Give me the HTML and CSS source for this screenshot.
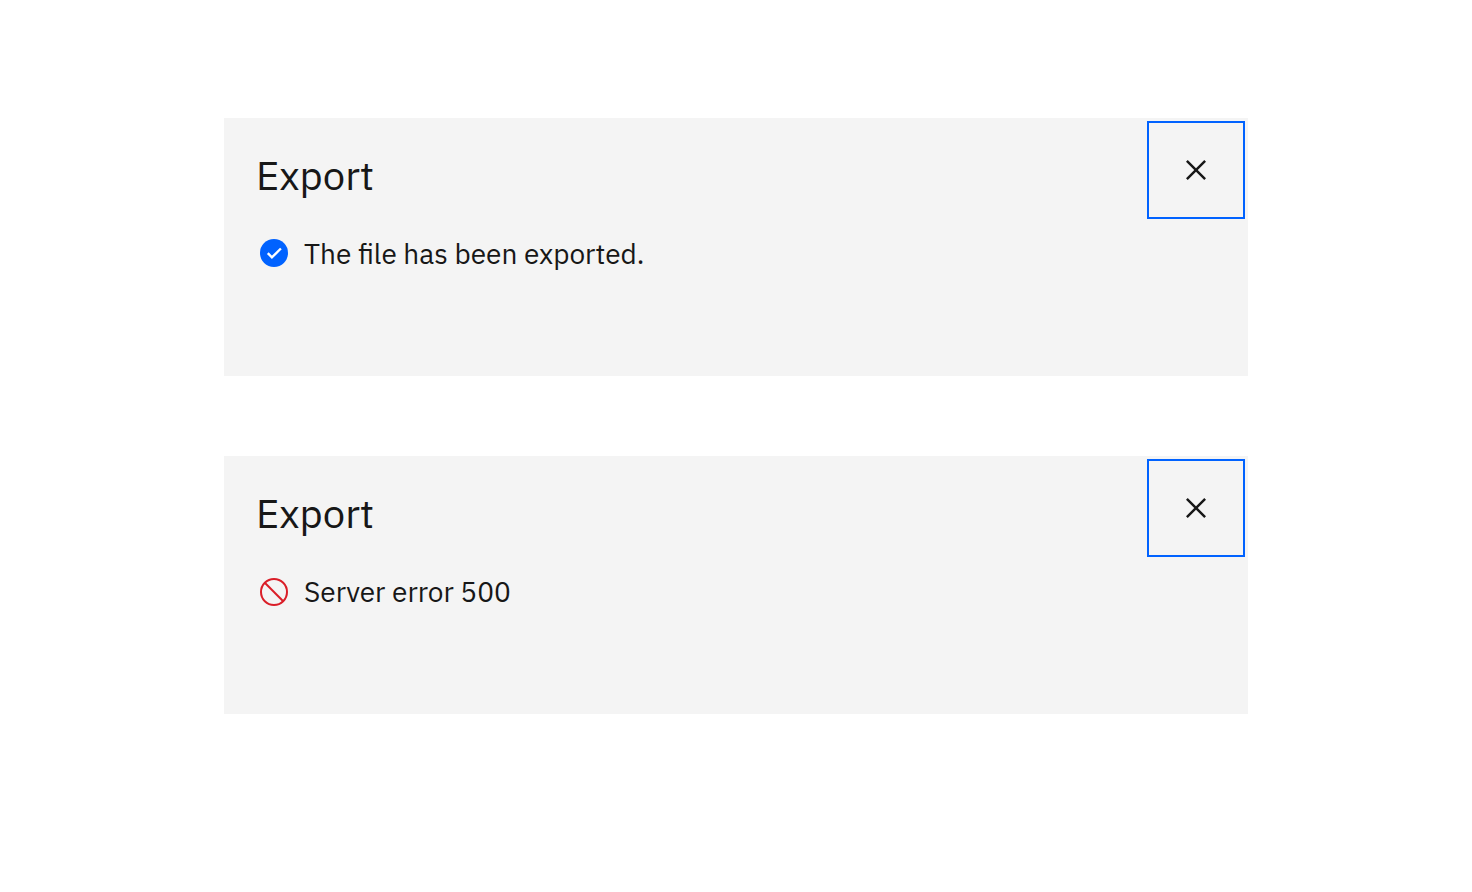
FILE: index.html
```html
<!DOCTYPE html>
<html lang="en">
<head>
<meta charset="utf-8">
<title>Export</title>
<link rel="stylesheet" href="styles.css">
</head>
<body>
<main class="page">
  <section class="modal" role="dialog" aria-labelledby="title-success">
    <div class="content">
      <h2 class="title" id="title-success">Export</h2>
      <p class="status">
        <svg class="status-icon" viewBox="0 0 32 32" aria-hidden="true"><circle cx="16" cy="15" r="14" fill="#0062ff"/><path d="m9.8 15.2 4.1 4.2 9-8.9" fill="none" stroke="#fff" stroke-width="2.4"/></svg>
        <span>The file has been exported.</span>
      </p>
    </div>
    <button class="close" type="button" aria-label="Close">
      <svg class="close-icon" viewBox="0 0 32 32" aria-hidden="true"><path d="M24 9.4 22.6 8 16 14.6 9.4 8 8 9.4 14.6 16 8 22.6 9.4 24 16 17.4 22.6 24 24 22.6 17.4 16Z" fill="#171717"/></svg>
    </button>
  </section>
  <section class="modal" role="dialog" aria-labelledby="title-error">
    <div class="content">
      <h2 class="title" id="title-error">Export</h2>
      <p class="status">
        <svg class="status-icon" viewBox="0 0 32 32" aria-hidden="true"><g fill="none" stroke="#da1e28" stroke-width="2"><circle cx="16" cy="16" r="13"/><path d="m6.8 6.8 18.4 18.4"/></g></svg>
        <span>Server error 500</span>
      </p>
    </div>
    <button class="close" type="button" aria-label="Close">
      <svg class="close-icon" viewBox="0 0 32 32" aria-hidden="true"><path d="M24 9.4 22.6 8 16 14.6 9.4 8 8 9.4 14.6 16 8 22.6 9.4 24 16 17.4 22.6 24 24 22.6 17.4 16Z" fill="#171717"/></svg>
    </button>
  </section>
</main>
</body>
</html>
```
FILE: styles.css
```css
* {
  box-sizing: border-box;
}

body {
  margin: 0;
  background: #fff;
  color: #171717;
  font-family: "IBM Plex Sans", "Noto Sans", sans-serif;
}

.page {
  display: flex;
  flex-direction: column;
  align-items: center;
  gap: 80px;
  padding: 118px 32px;
}

.modal {
  display: flex;
  align-items: flex-start;
  justify-content: space-between;
  width: 100%;
  max-width: 1024px;
  padding: 3px 3px 0 0;
  background: #f4f4f4;
}

.content {
  padding: 28px 0 102px 32px;
}

.title {
  margin: 0 0 32px;
  font-size: 40px;
  font-weight: 400;
  line-height: 53px;
}

.status {
  display: flex;
  align-items: center;
  gap: 14px;
  margin: 0;
  padding-left: 2px;
  font-size: 28px;
  line-height: 40px;
}

.status-icon {
  flex: none;
  width: 32px;
  height: 32px;
}

.close {
  display: flex;
  flex: none;
  align-items: center;
  justify-content: center;
  width: 98px;
  height: 98px;
  padding: 0;
  border: 2px solid #0062ff;
  background: transparent;
  cursor: pointer;
}

.close-icon {
  width: 40px;
  height: 40px;
}
```
